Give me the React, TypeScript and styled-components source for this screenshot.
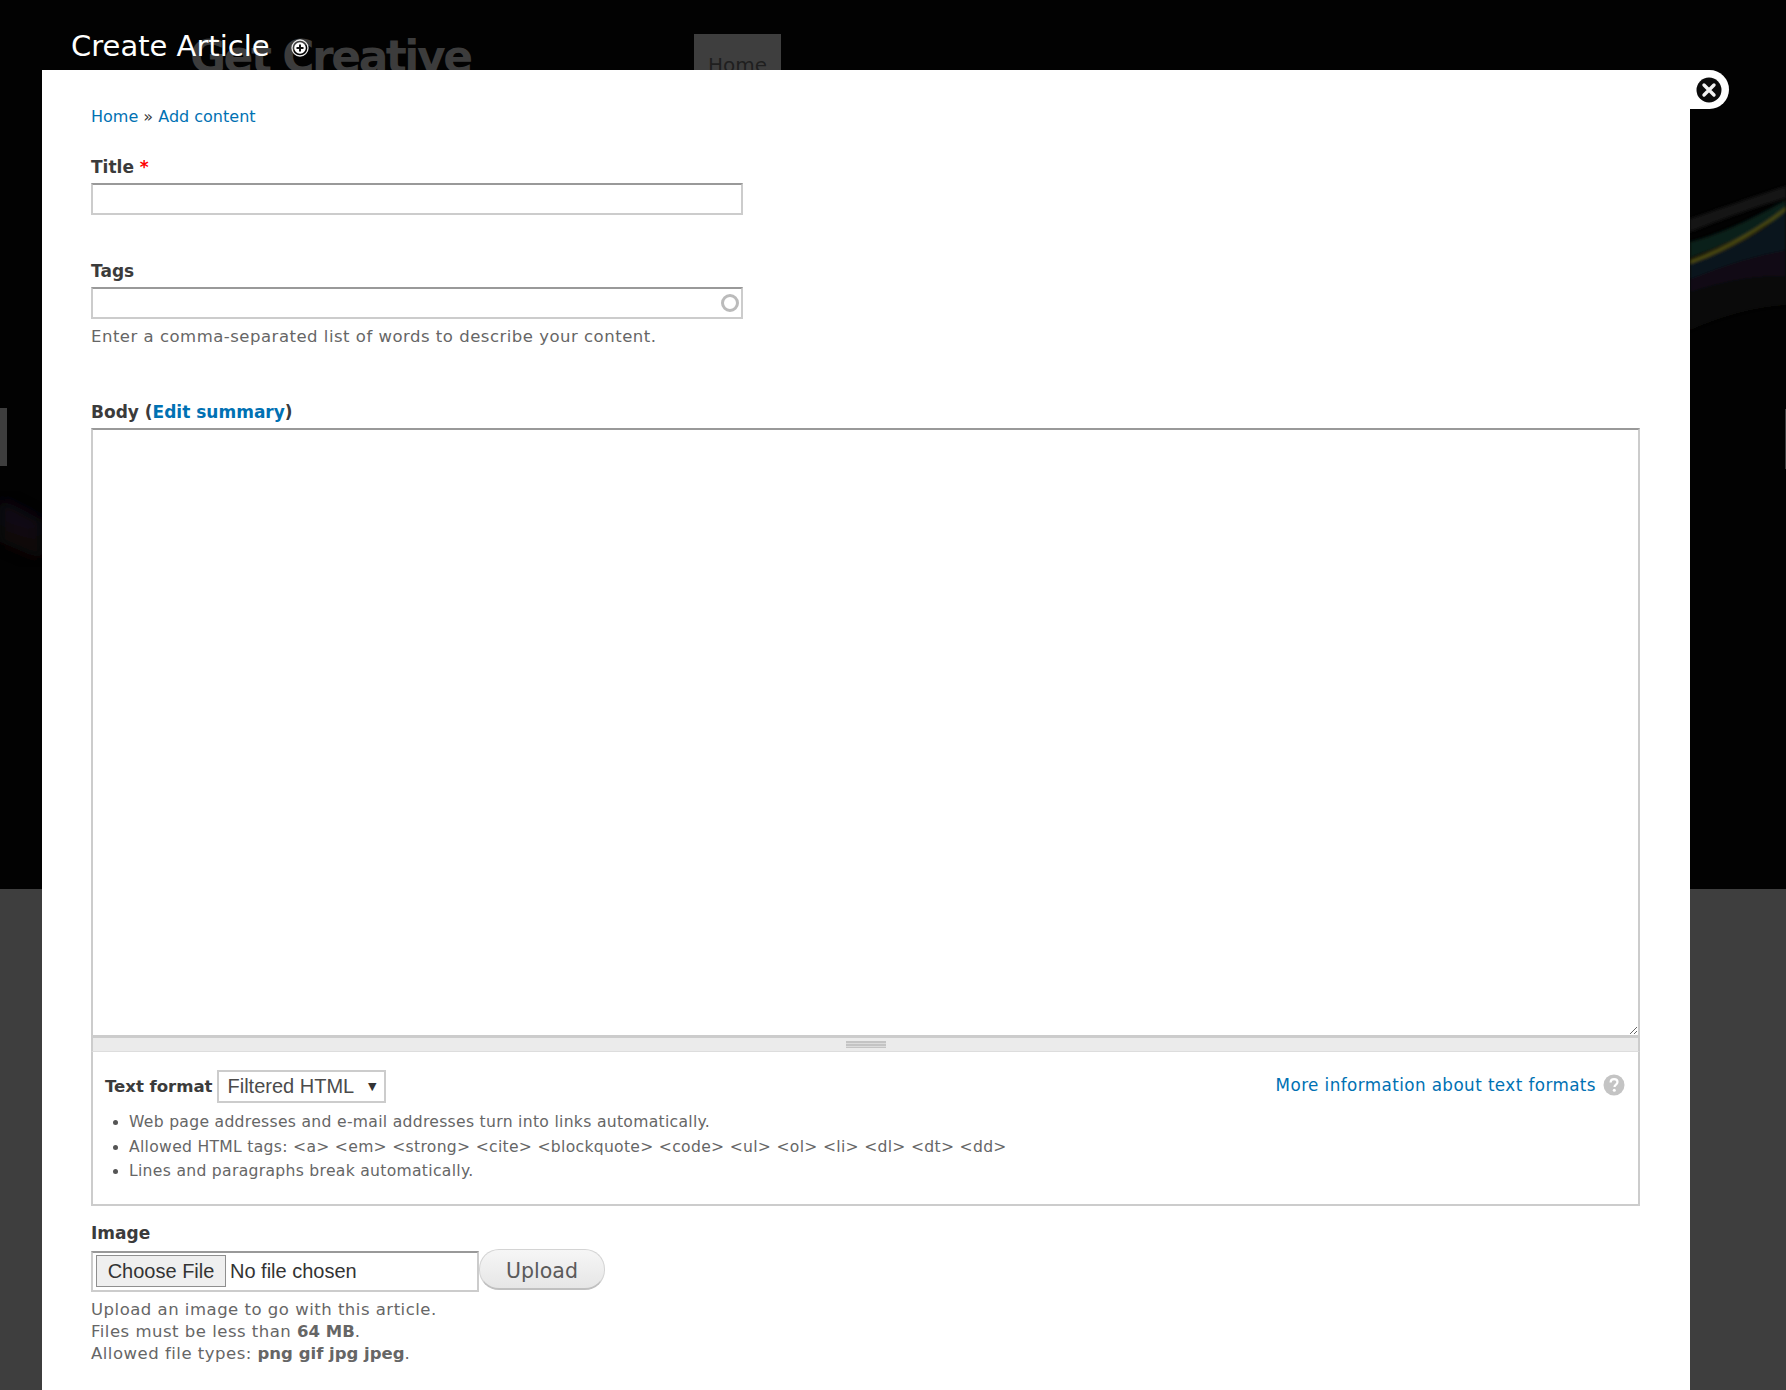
import React from "react";
import styled, { createGlobalStyle } from "styled-components";

const font = `"DejaVu Sans", "Noto Sans", sans-serif`;
const arial = `"Liberation Sans", Arial, sans-serif`;

const Global = createGlobalStyle`
  html, body { margin: 0; padding: 0; height: 1390px; overflow: hidden; background: #3e3e3e; }
  body { font-family: ${font}; }
  * { box-sizing: border-box; }
`;

const Page = styled.div`
  position: relative;
  width: 100%;
  height: 1390px;
  overflow: hidden;
  display: flex;
  flex-direction: column;
`;
const SiteHeader = styled.header`
  position: relative;
  flex: 0 0 889px;
  background: #020202;
  display: flex;
  align-items: flex-start;
  padding-left: 190px;
`;
const SiteFooter = styled.footer`
  flex: 1;
  background: #3e3e3e;
`;
const Streaks = styled.svg`
  position: absolute;
  inset: 0;
  width: 100%;
  height: 100%;
`;
const Logo = styled.div`
  position: relative;
  margin-top: 31px;
  font: bold 44px/52px ${font};
  letter-spacing: -2.5px;
  color: #3c3c3c;
  white-space: nowrap;
  width: 504px;
`;
const NavTab = styled.a`
  position: relative;
  margin-top: 34px;
  width: 87px;
  height: 60px;
  background: #3e3e3e;
  color: #1f1f1f;
  font: 20px/22px ${font};
  padding: 20px 0 0 14px;
`;
const SlideArrow = styled.div<{ $side: "left" | "right"; $w: number; $top: number; $h: number }>`
  position: absolute;
  ${(p) => p.$side}: 0;
  top: ${(p) => p.$top}px;
  width: ${(p) => p.$w}px;
  height: ${(p) => p.$h}px;
  background: #3e3e3e;
`;

const Overlay = styled.div`
  position: absolute;
  inset: 0;
  padding: 0 96px 0 42px;
  display: flex;
  flex-direction: column;
`;
const TitleBar = styled.div`
  flex: 0 0 70px;
  padding: 24px 0 0 29px;
  display: flex;
  align-items: flex-start;
  gap: 21px;
`;
const DialogTitle = styled.h1`
  margin: 0;
  font: normal 29px/44px ${font};
  color: #fff;
`;
const AddIcon = styled.svg`
  width: 18px;
  height: 18px;
  margin-top: 15px;
`;
const Dialog = styled.div`
  position: relative;
  flex: 1;
  background: #fff;
  padding: 37px 50px 0 49px;
`;
const CloseTab = styled.a`
  position: absolute;
  top: 0;
  left: 100%;
  width: 39px;
  height: 39px;
  background: #fff;
  border-radius: 0 20px 20px 0;
  display: flex;
  align-items: center;
  justify-content: center;
  svg { width: 26px; height: 26px; margin-left: -1px; }
`;
const Crumbs = styled.div`
  font: 16px/20px ${font};
  color: #3b3b3b;
  height: 20px;
  margin-bottom: 28px;
`;
const Link = styled.a`
  color: #0071b3;
  text-decoration: none;
`;
const Field = styled.div<{ $mb: number }>`
  margin-bottom: ${(p) => p.$mb}px;
`;
const Label = styled.label`
  display: block;
  font: bold 17px/24px ${font};
  color: #3b3b3b;
  height: 28px;
`;
const Required = styled.span`
  color: #f00;
`;
const InputWrap = styled.div`
  position: relative;
  width: 652px;
`;
const TextInput = styled.input`
  display: block;
  width: 100%;
  height: 32px;
  border: 2px solid #ccc;
  border-top-color: #999;
  background: #fff;
  border-radius: 0;
  outline: none;
  padding: 4px;
`;
const Throbber = styled.span`
  position: absolute;
  right: 4px;
  top: 7px;
  width: 18px;
  height: 18px;
  border: 3.5px solid #bbb;
  border-radius: 50%;
`;
const Description = styled.div`
  font: 16.5px/22px ${font};
  letter-spacing: 0.5px;
  color: #666;
  margin-top: 7px;
`;
const BodyArea = styled.textarea`
  display: block;
  width: 100%;
  height: 608px;
  border: 2px solid #ccc;
  border-top-color: #999;
  border-bottom-width: 1px;
  border-radius: 0;
  outline: none;
  padding: 4px;
  background: #fff;
  resize: vertical;
`;
const Grip = styled.div`
  height: 16px;
  background: #ebebeb;
  border: solid #ccc;
  border-width: 2px 2px 1px;
  border-bottom-color: #ddd;
  display: flex;
  justify-content: center;
  padding-top: 3px;
  &::after {
    content: "";
    width: 40px;
    height: 7px;
    background: repeating-linear-gradient(to bottom, #c4c4c4 0 2px, #dcdcdc 2px 3px);
  }
`;
const FormatBox = styled.div`
  height: 154px;
  border: 2px solid #ccc;
  border-top: 0;
  padding: 18px 13px 0 12px;
`;
const FormatRow = styled.div`
  display: flex;
  align-items: center;
  justify-content: space-between;
  height: 33px;
`;
const FormatLeft = styled.div`
  display: flex;
  align-items: center;
  gap: 5px;
`;
const FormatLabel = styled.span`
  font: bold 16.6px/24px ${font};
  letter-spacing: -0.05px;
  color: #3b3b3b;
`;
const SelectWrap = styled.div`
  position: relative;
  width: 169px;
  height: 33px;
  &::after {
    content: "▼";
    position: absolute;
    right: 10px;
    top: 9px;
    font: 11px/16px ${font};
    color: #333;
    pointer-events: none;
  }
`;
const Select = styled.select`
  appearance: none;
  display: block;
  width: 100%;
  height: 33px;
  border: 2px solid #ccc;
  border-radius: 0;
  background: #fff;
  color: #4b4b4b;
  font: 20px ${arial};
  padding: 0 0 2px 8px;
  outline: none;
`;
const HelpLink = styled.div`
  display: flex;
  align-items: center;
  gap: 7px;
  padding-bottom: 4px;
  font: 16.8px/22px ${font};
  letter-spacing: 0.41px;
  svg { width: 22px; height: 22px; }
`;
const Tips = styled.ul`
  margin: 7px 0 0;
  padding: 0 0 0 24px;
  font: 15.6px/24.5px ${font};
  letter-spacing: 0.3px;
  color: #666;
  li::marker { color: #555; }
`;
const FileRow = styled.div`
  display: flex;
  align-items: flex-start;
`;
const FileInput = styled.input`
  width: 388px;
  height: 41px;
  border: 2px solid #ccc;
  border-top-color: #999;
  padding: 2px 3px;
  background: #fff;
  color: #333;
  font: 20px ${arial};
  margin: 2px 0 0;
  &::file-selector-button {
    width: 130px;
    height: 32px;
    margin: 0 4px 0 0;
    padding: 0;
    border: 1px solid #8f8f8f;
    border-radius: 0;
    background: #efefef;
    color: #333;
    font: 20px ${arial};
  }
`;
const UploadButton = styled.button`
  width: 126px;
  height: 41px;
  border-radius: 20px;
  border: 1px solid #d4d4d4;
  border-bottom: 2px solid #c0c0c0;
  background: linear-gradient(to bottom, #f6f6f6, #e6e6e6);
  color: #5a5a5a;
  font: 20.5px ${font};
  padding: 3px 0 0;
`;
const Strong = styled.strong`
  font-weight: bold;
  letter-spacing: 0;
`;

export default function App() {
  return (
    <>
      <Global />
      <Page>
        <SiteHeader>
          <Streaks viewBox="0 0 1786 889" preserveAspectRatio="none">
            <defs>
              <filter id="soft"><feGaussianBlur stdDeviation="1.5" /></filter>
              <filter id="softer"><feGaussianBlur stdDeviation="7" /></filter>
            </defs>
            <g filter="url(#soft)" opacity="0.75">
              <path d="M1690 219 Q1745 200 1786 186 L1786 198 Q1740 212 1690 232Z" fill="#1c1c1c" />
              <path d="M1690 242 Q1730 232 1786 200 L1786 215 Q1740 240 1690 258Z" fill="#0e2a20" />
              <path d="M1690 260 Q1745 240 1786 207 L1786 210 Q1745 244 1690 264Z" fill="#6a6814" />
              <path d="M1690 264 Q1745 245 1786 212 L1786 250 Q1740 258 1690 279Z" fill="#0e1c28" />
              <path d="M1690 279 Q1740 258 1786 250 L1786 276 Q1740 275 1690 292Z" fill="#16101c" />
              <path d="M1690 292 Q1740 275 1786 276 L1786 305 Q1740 308 1690 330Z" fill="#11100c" />
            </g>
            <g filter="url(#softer)" opacity="0.7">
              <path d="M0 498 L42 520 L42 538 L0 525Z" fill="#150c1e" />
              <path d="M0 525 L42 538 L42 560 L0 542Z" fill="#170a0e" />
            </g>
          </Streaks>
          <Logo>Get Creative</Logo>
          <NavTab>Home</NavTab>
          <SlideArrow $side="left" $w={7} $top={408} $h={58} />
          <SlideArrow $side="right" $w={1} $top={409} $h={60} />
        </SiteHeader>
        <SiteFooter />
        <Overlay>
          <TitleBar>
            <DialogTitle>Create Article</DialogTitle>
            <AddIcon viewBox="0 0 18 18" aria-hidden>
              <circle cx="9" cy="9" r="8" fill="none" stroke="#e8e8e8" strokeWidth="1.3" />
              <circle cx="9" cy="9" r="5.8" fill="#fff" />
              <path d="M9 5.5v7M5.5 9h7" stroke="#111" strokeWidth="2" />
            </AddIcon>
          </TitleBar>
          <Dialog>
            <CloseTab>
              <svg viewBox="0 0 26 26" aria-hidden>
                <circle cx="13" cy="13" r="12.5" fill="#0a0a0a" />
                <path d="M8 8l10 10M18 8L8 18" stroke="#f2f2f2" strokeWidth="3.4" strokeLinecap="round" />
              </svg>
            </CloseTab>
            <Crumbs>
              <Link>Home</Link> » <Link>Add content</Link>
            </Crumbs>
            <Field $mb={44}>
              <Label>
                Title <Required>*</Required>
              </Label>
              <InputWrap>
                <TextInput type="text" />
              </InputWrap>
            </Field>
            <Field $mb={52}>
              <Label>Tags</Label>
              <InputWrap>
                <TextInput type="text" />
                <Throbber />
              </InputWrap>
              <Description>Enter a comma-separated list of words to describe your content.</Description>
            </Field>
            <Field $mb={15}>
              <Label>
                Body (<Link>Edit summary</Link>)
              </Label>
              <BodyArea />
              <Grip />
              <FormatBox>
                <FormatRow>
                  <FormatLeft>
                    <FormatLabel>Text format</FormatLabel>
                    <SelectWrap>
                      <Select defaultValue="Filtered HTML">
                        <option>Filtered HTML</option>
                        <option>Plain text</option>
                      </Select>
                    </SelectWrap>
                  </FormatLeft>
                  <HelpLink>
                    <Link>More information about text formats</Link>
                    <svg viewBox="0 0 22 22" aria-hidden>
                      <circle cx="11" cy="11" r="10.5" fill="#c4c4c4" />
                      <path d="M7.6 8.4c0-2 1.5-3.2 3.5-3.2s3.4 1.2 3.4 2.9c0 2.5-3 2.5-3 4.9" fill="none" stroke="#fff" strokeWidth="2.2" />
                      <circle cx="11.3" cy="16.2" r="1.5" fill="#fff" />
                    </svg>
                  </HelpLink>
                </FormatRow>
                <Tips>
                  <li>Web page addresses and e-mail addresses turn into links automatically.</li>
                  <li>
                    Allowed HTML tags: &lt;a&gt; &lt;em&gt; &lt;strong&gt; &lt;cite&gt; &lt;blockquote&gt; &lt;code&gt; &lt;ul&gt; &lt;ol&gt; &lt;li&gt; &lt;dl&gt; &lt;dt&gt; &lt;dd&gt;
                  </li>
                  <li>Lines and paragraphs break automatically.</li>
                </Tips>
              </FormatBox>
            </Field>
            <Field $mb={0}>
              <Label>Image</Label>
              <FileRow>
                <FileInput type="file" />
                <UploadButton>Upload</UploadButton>
              </FileRow>
              <Description>
                Upload an image to go with this article.
                <br />
                Files must be less than <Strong>64 MB</Strong>.
                <br />
                Allowed file types: <Strong>png gif jpg jpeg</Strong>.
              </Description>
            </Field>
          </Dialog>
        </Overlay>
      </Page>
    </>
  );
}
